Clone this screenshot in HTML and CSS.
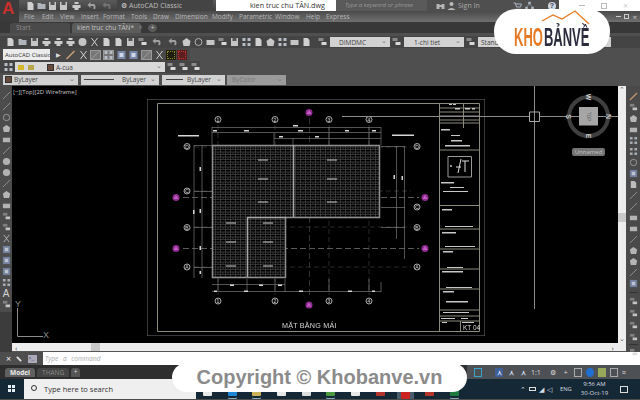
FILE: index.html
```html
<!DOCTYPE html>
<html lang="en">
<head>
<meta charset="utf-8">
<title>AutoCAD Classic - kien truc chu TÂN.dwg</title>
<link rel="stylesheet" href="styles.css">
</head>
<body>
<div class="app">
  <svg width="0" height="0" class="defs">
    <defs>
      <filter id="soft" x="0" y="0" width="100%" height="100%"><feGaussianBlur stdDeviation=".4"/></filter>
      <pattern id="bricks" width="10" height="5" patternUnits="userSpaceOnUse">
        <rect width="10" height="5" fill="#050505"/>
        <path d="M0 .5H10M0 3H10M.5 0V5M5.500 0V5M3 3V5M8 3V5" stroke="#5a5a5a" stroke-width=".5" fill="none"/>
      </pattern>
      <symbol id="i-doc" viewBox="0 0 10 10"><path d="M2 1h4l2 2v6H2z" fill="#d0d0d0"/></symbol>
      <symbol id="i-open" viewBox="0 0 10 10"><path d="M1 2h3l1 1h4v5H1z" fill="#b0b5bb"/></symbol>
      <symbol id="i-save" viewBox="0 0 10 10"><path d="M1.500 1h7v8h-7z" fill="#c6c6c6"/><path d="M3 1h4v3H3z" fill="#555"/></symbol>
      <symbol id="i-print" viewBox="0 0 10 10"><path d="M3 1h4v2H3zM1 4h8v3H1zM3 7h4v2H3z" fill="#cacaca"/></symbol>
      <symbol id="i-undo" viewBox="0 0 10 10"><path d="M1 4l3-3v2h3q2 0 2 3t-2 2v-3H4v2z" fill="#a0a0a0"/></symbol>
      <symbol id="i-cut" viewBox="0 0 10 10"><path d="M2 1l6 8M8 1L2 9" stroke="#cecece" stroke-width="1"/></symbol>
      <symbol id="i-blue" viewBox="0 0 10 10"><path d="M1 1h8v8H1z" fill="#7788aa"/><path d="M3 3h4v4H3z" fill="#d0d7e8"/></symbol>
      <symbol id="i-grid" viewBox="0 0 10 10"><path d="M1 1h3v3H1zM6 1h3v3H6zM1 6h3v3H1zM6 6h3v3H6z" fill="#b6bdc6"/></symbol>
      <symbol id="i-line" viewBox="0 0 10 10"><path d="M1 9L9 1" stroke="#a0a0a0" stroke-width="1"/></symbol>
      <symbol id="i-pencil" viewBox="0 0 10 10"><path d="M1 9L9 1" stroke="#d0a070" stroke-width="1.500"/></symbol>
      <symbol id="i-poly" viewBox="0 0 10 10"><path d="M5 1l4 3-1 5H2L1 4z" fill="#c8c8c8"/></symbol>
      <symbol id="i-ball" viewBox="0 0 10 10"><circle cx="5" cy="5" r="4" fill="#c4c4c4"/></symbol>
      <symbol id="i-ring" viewBox="0 0 10 10"><circle cx="5" cy="5" r="3.500" fill="none" stroke="#b0b0b0" stroke-width="1"/></symbol>
      <symbol id="i-box" viewBox="0 0 10 10"><path d="M1 3h8v5H1z" fill="#c6c6c6"/></symbol>
      <symbol id="i-stack" viewBox="0 0 10 10"><path d="M1 1h5v3H1z" fill="#8a8a8a"/><path d="M4 5h5v3H4z" fill="#d8d8d8"/></symbol>
      <symbol id="i-bino" viewBox="0 0 10 10"><path d="M1 3h3v5H1zM6 3h3v5H6zM4 4h2v2H4z" fill="#b4b4b4"/></symbol>
      <symbol id="i-user" viewBox="0 0 10 10"><circle cx="5" cy="3" r="2" fill="#bbb"/><path d="M1 9q4-4 8 0z" fill="#bbb"/></symbol>
      <symbol id="i-cart" viewBox="0 0 10 10"><path d="M1 2h2l1 4h4l1-3H3M4 8h1M7 8h1" fill="none" stroke="#a9b4c0" stroke-width="1"/></symbol>
      <symbol id="i-net" viewBox="0 0 10 10"><path d="M4 1h2v2H4zM1 6h2v2H1zM7 6h2v2H7zM5 3L2 6M5 3l3 3" fill="#a9b4c0" stroke="#a9b4c0" stroke-width=".6"/></symbol>
    </defs>
  </svg>

  <header class="titlebar">
    <div class="quick">
      <div class="app-logo">A</div>
      <svg class="ico"><use href="#i-doc"/></svg><svg class="ico"><use href="#i-open"/></svg><svg class="ico"><use href="#i-save"/></svg><svg class="ico"><use href="#i-save"/></svg><svg class="ico wide"><use href="#i-print"/></svg><svg class="ico wide"><use href="#i-undo"/></svg><svg class="ico wide dim"><use href="#i-undo"/></svg>
      <div class="workspace"><span class="gear">⚙</span>AutoCAD Classic</div>
    </div>
    <div class="doc-title">kien truc chu TÂN.dwg</div>
    <div class="search-zone">
      <span class="search">Type a keyword or phrase</span>
      <svg class="ico bino"><use href="#i-bino"/></svg><svg class="ico"><use href="#i-user"/></svg>
      <span class="sign">Sign In</span>
      <svg class="ico"><use href="#i-cart"/></svg><svg class="ico net"><use href="#i-net"/></svg>
      <span class="help">?</span>
    </div>
    <div class="winbtns">
      <span class="minimize"></span><span class="restore"></span><span class="close">×</span>
    </div>
  </header>

  <nav class="menubar">
    <span class="m-file">File</span><span class="m-edit">Edit</span><span class="m-view">View</span><span class="m-ins">Insert</span><span class="m-for">Format</span><span class="m-too">Tools</span><span class="m-dra">Draw</span><span class="m-dim">Dimension</span><span class="m-mod">Modify</span><span class="m-par">Parametric</span><span class="m-win">Window</span><span class="m-hel">Help</span><span>Express</span>
    <span class="mdi"><i class="mdi-min"></i><i class="mdi-res"></i><i class="mdi-x">×</i></span>
  </nav>

  <div class="tabbar">
    <span class="tab">Start</span>
    <span class="tab tab-on">kien truc chu TÂN* <i>×</i></span>
    <span class="tab-add">+</span>
  </div>

  <div class="ribbon">
    <div class="tool-row row1">
      <svg class="ico"><use href="#i-doc"/></svg><svg class="ico"><use href="#i-open"/></svg><svg class="ico"><use href="#i-save"/></svg><svg class="ico"><use href="#i-print"/></svg><svg class="ico"><use href="#i-print"/></svg><svg class="ico"><use href="#i-print"/></svg><svg class="ico"><use href="#i-ball"/></svg><svg class="ico"><use href="#i-cut"/></svg><svg class="ico"><use href="#i-doc"/></svg><svg class="ico"><use href="#i-doc"/></svg><svg class="ico"><use href="#i-save"/></svg><svg class="ico"><use href="#i-stack"/></svg><svg class="ico wide"><use href="#i-undo"/></svg><svg class="ico wide"><use href="#i-undo"/></svg><svg class="ico"><use href="#i-poly"/></svg><svg class="ico"><use href="#i-ring"/></svg><svg class="ico"><use href="#i-box"/></svg><svg class="ico"><use href="#i-stack"/></svg><svg class="ico"><use href="#i-save"/></svg><svg class="ico"><use href="#i-grid"/></svg><svg class="ico"><use href="#i-doc"/></svg><svg class="ico"><use href="#i-poly"/></svg><svg class="ico"><use href="#i-grid"/></svg><svg class="ico"><use href="#i-box"/></svg><svg class="ico"><use href="#i-doc"/></svg>
      <div class="styles">
        <svg class="ico"><use href="#i-stack"/></svg><span class="combo c-dim">DIMDMC<b>⌄</b></span>
        <svg class="ico"><use href="#i-stack"/></svg><span class="combo c-chi">1-chi tiet<b>⌄</b></span>
        <svg class="ico"><use href="#i-stack"/></svg><span class="combo c-std">Standard<b>⌄</b></span>
      </div>
    </div>
    <div class="tool-row row2">
      <span class="combo c-ws">AutoCAD Classic</span>
      <span class="play">▶</span>
      <svg class="ico"><use href="#i-pencil"/></svg><svg class="ico"><use href="#i-cut"/></svg><svg class="ico boxed"><use href="#i-line"/></svg><svg class="ico boxed"><use href="#i-grid"/></svg><svg class="ico"><use href="#i-blue"/></svg><svg class="ico"><use href="#i-blue"/></svg><svg class="ico boxed"><use href="#i-line"/></svg><svg class="ico"><use href="#i-cut"/></svg>
      <span class="swatch sw-green"></span><span class="swatch sw-red"></span>
    </div>
    <div class="tool-row row3">
      <svg class="ico"><use href="#i-grid"/></svg>
      <span class="combo c-layer"><span class="lamp"></span><span class="lsw"></span>A-cua<b>⌄</b></span>
      <svg class="ico"><use href="#i-stack"/></svg><svg class="ico"><use href="#i-stack"/></svg><svg class="ico"><use href="#i-stack"/></svg>
    </div>
    <div class="tool-row row4">
      <span class="combo c-by"><span class="lsw"></span>ByLayer<b>⌄</b></span>
      <span class="combo c-by"><i class="rule"></i>ByLayer<b>⌄</b></span>
      <span class="combo c-by2"><i class="rule"></i>ByLayer<b>⌄</b></span>
      <span class="combo c-col">ByColor<b>⌄</b></span>
    </div>
  </div>

  <div class="workarea">
    <aside class="side-left">
      <div class="left-tools">
        <svg class="sico"><use href="#i-line"/></svg><svg class="sico"><use href="#i-line"/></svg><svg class="sico"><use href="#i-ring"/></svg><svg class="sico"><use href="#i-poly"/></svg><svg class="sico"><use href="#i-box"/></svg><svg class="sico"><use href="#i-line"/></svg><svg class="sico"><use href="#i-ball"/></svg><svg class="sico"><use href="#i-ball"/></svg><svg class="sico"><use href="#i-line"/></svg><svg class="sico"><use href="#i-poly"/></svg><svg class="sico"><use href="#i-box"/></svg><svg class="sico"><use href="#i-stack"/></svg><svg class="sico"><use href="#i-stack"/></svg><svg class="sico"><use href="#i-cut"/></svg><svg class="sico"><use href="#i-blue"/></svg><svg class="sico"><use href="#i-blue"/></svg><svg class="sico"><use href="#i-blue"/></svg><svg class="sico"><use href="#i-grid"/></svg>
        <span class="side-a">A</span>
        <svg class="sico"><use href="#i-stack"/></svg>
      </div>
    </aside>
    <div class="center">
      <main class="canvas">
        <div class="viewlabel">[−][Top][2D Wireframe]</div>
        <svg class="drawing" viewBox="12 87 606 257" width="606" height="257">
          <g filter="url(#soft)">
            <g fill="none">
              <path d="M147 100H485V337H147z" stroke="#6f6f6f"/>
              <path d="M157.500 104.500H479.500V332.500H157.500z" stroke="#8b8b7c"/>
            </g>
            <g stroke="#2e2e2e" stroke-dasharray="5 3" fill="none">
              <path d="M218 126V296M275 126V296M329 126V296M369 126V296"/>
              <path d="M194 148H411M194 192H411M194 228H411M194 268H411"/>
            </g>
            <g stroke="#5a5a5a" stroke-dasharray="6 3" fill="none">
              <path d="M183 198.500H419M183 249.500H419"/>
            </g>
            <path d="M309.500 119V299" stroke="#333" stroke-dasharray="6 3" fill="none"/>
            <path d="M212.500 146.500H379.500V218.500H285.500V278.500H212.500z" fill="url(#bricks)" stroke="#8f8f8f" stroke-width="1.500"/>
            <path d="M293.500 146V218M247.500 218V278M247 218.500H286" stroke="#a8a8a8" stroke-width="1.500" fill="none"/>
            <path d="M258 161h10M258 180h10M258 203h10M327 161h10M327 180h10M327 203h10M226 224h10M263 224h10M226 243h10M263 243h10M226 267h10M263 267h10" stroke="#c9c9c9" fill="none"/>
            <g stroke="#777" fill="none" stroke-width=".7">
              <path d="M212 128.500H381M212 133.500H381M274 139.500H381M212 128V146M381 128V146M274 134V146M293 139V146M329 128V146M369 128V146"/>
              <path d="M194 146.500H212M194 192.500H212M194 228.500H212M194 268.500H212M194 146V279M202 146V279"/>
              <path d="M381 147.500H405M381 208.500H405M381 228.500H405M396.500 147V240M404.500 147V260"/>
              <path d="M212 285.500H285M212 292.500H381M218 280V293M247 280V293M275 280V293M285 280V293M329 280V293M369 280V293M381 283V293"/>
            </g>
            <g fill="#d6d6d6">
              <path d="M213 131h4v1.500h-4zM244 131h5v1.500h-5zM293 126h5v1.500h-5zM298 131h5v1.500h-5zM315 137h4v1.500h-4zM345 131h4v1.500h-4zM372 131h4v1.500h-4zM279 137h4v1.500h-4z"/>
              <path d="M199.500 168h1.500v4h-1.500zM193 211h1.500v4h-1.500zM199.500 210h1.500v4h-1.500zM199.500 247h1.500v4h-1.500zM199.500 272h1.500v3h-1.500zM393.500 176h1.500v4h-1.500zM401.500 177h1.500v4h-1.500z"/>
              <path d="M230 285.500h4v1.500h-4zM259 285.500h4v1.500h-4zM278 285.500h4v1.500h-4zM214 291.500h3v1.500h-3zM244 291.500h4v1.500h-4zM299 291.500h4v1.500h-4zM348 291.500h4v1.500h-4zM372 291.500h3v1.500h-3z"/>
              <path d="M178 136h21v1.500h-21zM392 135.500h22v1.500h-22z"/>
            </g>
            <g fill="#111" stroke="#b8b8b8" stroke-width=".9">
              <circle cx="218" cy="120.500" r="3"/><circle cx="275" cy="120.500" r="3"/><circle cx="329" cy="120.500" r="3"/><circle cx="369" cy="120.500" r="3"/>
              <circle cx="218" cy="302" r="3"/><circle cx="275" cy="302" r="3"/><circle cx="329" cy="302" r="3"/><circle cx="369" cy="302" r="3"/>
              <circle cx="187" cy="147.500" r="3"/><circle cx="187" cy="192" r="3"/><circle cx="187" cy="228.500" r="3"/><circle cx="187" cy="268" r="3"/>
              <circle cx="417" cy="147.500" r="3"/><circle cx="417" cy="208" r="3"/><circle cx="417" cy="228.500" r="3"/><circle cx="417" cy="268" r="3"/>
            </g>
            <g class="bubble-text">
              <text x="218" y="122.500">1</text><text x="275" y="122.500">2</text><text x="329" y="122.500">3</text><text x="369" y="122.500">4</text>
              <text x="218" y="304">1</text><text x="275" y="304">2</text><text x="329" y="304">3</text><text x="369" y="304">4</text>
              <text x="187" y="149.500">D</text><text x="187" y="194">C</text><text x="187" y="230.500">B</text><text x="187" y="270">A</text>
              <text x="417" y="149.500">D</text><text x="417" y="210">C</text><text x="417" y="230.500">B</text><text x="417" y="270">A</text>
            </g>
            <g fill="#8e2a90">
              <circle cx="309" cy="113.500" r="3.500"/><circle cx="176" cy="198.500" r="3.500"/><circle cx="425" cy="198.500" r="3.500"/><circle cx="176" cy="249.500" r="3.500"/><circle cx="425" cy="249.500" r="3.500"/><circle cx="309" cy="306" r="3.500"/>
            </g>
            <g fill="#c060c0">
              <path d="M309 111l2.500 4h-5zM176 196l2.500 4h-5zM425 196l2.500 4h-5zM176 247l2.500 4h-5zM425 247l2.500 4h-5zM309 303.500l2.500 4h-5z"/>
            </g>
            <g stroke="#8b8b7c" fill="none">
              <path d="M439.500 104V332M439.500 151H479M439.500 206.500H479M439.500 230H479M439.500 250H479M439.500 270H479M439.500 290H479M439.500 311H479M439.500 317H479M439.500 322H479"/>
              <path d="M439.500 109H479M439.500 113H479M439.500 117H479M439.500 121H479M439.500 124H479M463.500 104V129M460.500 322V332"/>
              <path d="M448 157.500H471.500V178H448z" stroke="#9a9a9a"/>
              <path d="M458 174l3-14M462 162h7M465 162v11M456 168h5" stroke="#ddd"/>
            </g>
            <g fill="#c8c8c8">
              <path d="M441 130h9v1.500h-9zM451 136h9v1h-9zM451 141h11v1.500h-11zM445 146h25v1.500h-25zM441 183h13v1.500h-13zM450 188h14v1h-14zM443 192h25v1h-25zM442 210h10v1.500h-10zM445 227h28v1h-28zM442 233h14v1.500h-14zM445 247h30v1h-30zM443 252h10v1.500h-10zM447 268h16v1h-16zM442 272h21v1.500h-21zM446 288h26v1h-26zM443 292h11v1.500h-11zM446 302h22v1.500h-22zM443 313h26v1h-26zM441 319h14v1h-14zM461 319h7v1h-7zM442 323h5v1h-5zM462 323h12v1h-12z"/>
              <path d="M449 105h3v1h-3zM453 105h3v1h-3zM455 109h5v1.500h-5zM465 109h5v1.500h-5zM472 109h3v1.500h-3z"/>
              <circle cx="451" cy="167" r="1"/>
            </g>
            <text x="463" y="330.500" class="t-kt">KT 04</text>
            <text x="282" y="328.500" class="t-title">MẶT BẰNG MÁI</text>
          </g>
          <g stroke="#8c8c8c" fill="none">
            <path d="M534.500 87V310M342 117.500H529M540 117.500H618"/>
            <path d="M529.500 113H539.500V122.500H529.500z" stroke="#aaa"/>
          </g>
          <circle cx="588.500" cy="117.500" r="19.500" fill="none" stroke="#3f3f3f" stroke-width="4"/>
          <path d="M579 108h19v18.500h-19z" fill="#a6a6a6"/>
          <text x="588.500" y="119" class="t-top" transform="rotate(90 588.500 117.500)">TOP</text>
          <text x="588.500" y="100.500" class="t-cmp" transform="rotate(90 588.500 98)">W</text>
          <text x="608.500" y="120" class="t-cmp" transform="rotate(90 608.500 117.500)">N</text>
          <text x="588.500" y="139.500" class="t-cmp" transform="rotate(90 588.500 137)">E</text>
          <text x="568" y="120" class="t-cmp" transform="rotate(90 568 117.500)">S</text>
          <rect x="572" y="149" width="33" height="8" rx="2" fill="#737373"/>
          <text x="588.500" y="155.200" class="t-unnamed">Unnamed</text>
          <path d="M17.500 309V337.500H43" stroke="#8a8a8a" fill="none"/>
          <text x="15" y="308" class="t-ucs">Y</text>
          <text x="43" y="339" class="t-ucs">X</text>
        </svg>
        <div class="vscroll">
          <span class="arrow">⌃</span>
          <span class="thumb-v"></span>
          <span class="arrow">⌄</span>
        </div>
      </main>
      <div class="hscroll"><span class="harrow">‹</span><span class="thumb-h"></span><span class="harrow">›</span></div>
    </div>
    <aside class="side-right">
      <svg class="sico"><use href="#i-pencil"/></svg><svg class="sico"><use href="#i-stack"/></svg><svg class="sico"><use href="#i-poly"/></svg><svg class="sico"><use href="#i-box"/></svg><svg class="sico"><use href="#i-grid"/></svg><svg class="sico"><use href="#i-grid"/></svg><svg class="sico"><use href="#i-ring"/></svg><svg class="sico"><use href="#i-blue"/></svg><svg class="sico"><use href="#i-doc"/></svg><svg class="sico"><use href="#i-line"/></svg><svg class="sico"><use href="#i-line"/></svg><svg class="sico"><use href="#i-box"/></svg><svg class="sico"><use href="#i-box"/></svg><svg class="sico"><use href="#i-line"/></svg><svg class="sico"><use href="#i-poly"/></svg><svg class="sico"><use href="#i-poly"/></svg><svg class="sico"><use href="#i-line"/></svg><svg class="sico"><use href="#i-blue"/></svg>
      <div class="right-group">
        <svg class="sico"><use href="#i-stack"/></svg><svg class="sico"><use href="#i-stack"/></svg><svg class="sico"><use href="#i-stack"/></svg><svg class="sico"><use href="#i-stack"/></svg>
      </div>
      <div class="right-group last">
        <svg class="sico"><use href="#i-stack"/></svg>
      </div>
    </aside>
  </div>

  <div class="cmdline">
    <span class="cmd-tools"><span class="cmd-x">×</span><span class="cmd-wrench"></span><span class="cmd-prompt">&gt;_</span></span>
    <span class="cmd-text">Type a command</span>
  </div>

  <div class="layouts">
    <div class="layout-tabs">
      <span class="lt lt-on">Model</span><span class="lt">THANG</span><span class="lt-add">+</span>
    </div>
    <div class="status">
      <span class="st st-blue"></span><span class="st st-a">⋏</span><span class="st st-a">⋏</span><span class="st st-a">⋏</span><span class="st-txt">1:1</span><span class="st st-gear">⚙</span><span class="st-txt st-plus">+</span><span class="st st-dim"></span><span class="st st-on"></span><span class="st st-grn"></span><span class="st st-dim"></span><span class="st-txt">≡</span>
    </div>
  </div>

  <footer class="taskbar">
    <span class="win"><i></i><i></i><i></i><i></i></span>
    <div class="task-search"><span class="lens"></span>Type here to search</div>
    <div class="task-apps">
      <span class="a-white"></span><span class="a-edge"></span><span class="a-folder"></span><span class="a-white"></span><span class="a-store"></span><span class="a-chrome"></span><span class="a-white"></span><span class="a-red"></span><span class="a-cad"></span><span class="a-red"></span><span class="a-xls"></span>
    </div>
    <div class="tray">
      <span class="tray-i">⌃</span><span class="batt"></span><span class="tray-i">◢</span><span class="tray-i">◁</span><span class="eng">ENG</span>
      <span class="clock">9:56 AM<br>30-Oct-19</span>
      <span class="notif"></span>
    </div>
  </footer>

  <div class="logo-pill">
    <svg class="roof" viewBox="0 0 52 18" width="52" height="18"><path d="M2 12L13 6l9 4L35 2l14 13" fill="none" stroke="#e67a24" stroke-width="1.300"/></svg>
    <div class="logo-text"><span class="kho">KHO</span><span class="banve">BẢNVỀ</span></div>
  </div>
  <div class="copy-pill">Copyright © Khobanve.vn</div>
</div>
</body>
</html>
```

FILE: styles.css
```css
* { box-sizing: border-box; }
html, body { margin: 0; padding: 0; background: #000; }
body { width: 640px; height: 400px; overflow: hidden; }
.app {
  position: relative;
  width: 640px;
  height: 400px;
  display: flex;
  flex-direction: column;
  font-family: "Open Sans", "Liberation Sans", sans-serif;
  font-size: 6.5px;
  color: #c9c9c9;
  background: #4c4c4c;
  overflow: hidden;
}
.defs { position: absolute; }
.ico { width: 11px; height: 10px; flex: none; }
.ico.wide { width: 15px; }
.ico.dim { opacity: .45; }
.ico.boxed { background: #777; outline: 1px solid #999; outline-offset: -1px; margin-right: 1px; }
.sico { display: block; width: 9px; height: 9px; flex: none; opacity: .85; }

.titlebar { height: 11px; display: flex; flex: none; background: #fff; }
.quick { width: 216px; display: flex; align-items: center; background: linear-gradient(#5a5a5a, #404040); padding-right: 3px; position: relative; }
.app-logo {
  width: 19px; height: 22px; margin-right: 6px; align-self: flex-start; flex: none;
  background: #3b3b3b; color: #c9302c;
  font: bold 17px/17px "Liberation Sans", sans-serif;
  padding-left: 2px;
  position: relative; z-index: 2;
  overflow: hidden;
}
.workspace { margin-left: 3px; flex: 1; height: 11px; background: #444; font-size: 7px; line-height: 11px; color: #bdbdbd; white-space: nowrap; }
.gear { margin: 0 2px 0 4px; color: #ddd; }
.doc-title { flex: 1; padding-left: 34px; color: #333; font-size: 7.2px; line-height: 11px; white-space: nowrap; }
.search-zone { width: 223px; display: flex; align-items: center; background: #4f4f4f; white-space: nowrap; overflow: hidden; flex: none; }
.search { width: 91px; padding-left: 9px; height: 11px; line-height: 10px; background: #5a5a5a; font-style: italic; font-size: 6px; color: #999; flex: none; }
.bino { margin-left: 8px; }
.sign { margin-left: 0; font-size: 7px; color: #aaa; width: 55px; padding-left: 1px; flex: none; }
.net { margin-left: 1px; }
.help { width: 8px; height: 8px; margin-left: 13px; border-radius: 50%; background: #cfd6e0; color: #345; font: bold 7px/8px "Liberation Sans", sans-serif; text-align: center; flex: none; }
.winbtns { width: 81px; flex: none; background: #fff; display: flex; align-items: center; gap: 16px; padding-left: 20px; color: #aaa; }
.minimize { width: 6px; height: 1px; background: #bbb; flex: none; }
.restore { width: 6px; height: 6px; border: 1px solid #bbb; flex: none; }
.close { font-size: 9px; line-height: 11px; font-weight: 300; }

.menubar {
  height: 11px; flex: none; display: flex; align-items: center;
  padding-left: 24px;
  background: linear-gradient(#4a4a4a, #707070);
  font-size: 6.5px; color: #b8b8b8; white-space: nowrap;
}
.m-file { width: 18px; }
.m-edit { width: 18px; }
.m-view { width: 21px; }
.m-ins { width: 22px; }
.m-for { width: 28px; }
.m-too { width: 22px; }
.m-dra { width: 22px; }
.m-dim { width: 37px; }
.m-mod { width: 27px; }
.m-par { width: 36px; }
.m-win { width: 31px; }
.m-hel { width: 20px; }
.mdi { margin-left: auto; display: flex; gap: 3px; align-items: center; padding-right: 3px; color: #ccc; }
.mdi-min { width: 5px; height: 1px; background: #ccc; }
.mdi-res { width: 5px; height: 5px; border: 1px solid #ccc; }
.mdi-x { font-style: normal; font-size: 8px; }
.tabbar { height: 11px; flex: none; display: flex; align-items: flex-end; padding-left: 10px; gap: 2px; background: #383838; }
.tab { height: 10px; width: 60px; padding-left: 6px; line-height: 10px; background: #4a4a4a; border-radius: 3px 3px 0 0; color: #8d8d8d; font-size: 6.5px; white-space: nowrap; }
.tab-on { width: 69px; background: #5c5c5c; color: #c5c5c5; padding-left: 5px; }
.tab-on i { font-style: normal; color: #888; margin-left: 3px; }
.tab-add { width: 9px; height: 8px; margin: 0 0 1px 5px; background: #5a5a5a; border-radius: 50%; text-align: center; line-height: 8px; color: #ccc; }

.ribbon { height: 53px; flex: none; display: flex; flex-direction: column; background: #4f4f4f; padding-top: 3px; }
.tool-row { display: flex; align-items: center; flex: none; white-space: nowrap; }
.row1 { height: 12px; padding-left: 5px; background: #444; }
.row1 .ico { margin-right: 1px; }
.styles { display: flex; align-items: center; background: #444; gap: 1px; margin-left: 4px; }
.row2 { height: 13px; padding-left: 3px; gap: 1.2px; width: 190px; background: #484848; }
.row3 { height: 12px; padding-left: 3px; width: 200px; gap: 1px; background: #444; }
.row4 { height: 13px; padding-left: 3px; gap: 2px; background: #4f4f4f; }
.combo { position: relative; display: flex; align-items: center; height: 10px; background: #d2d2d2; color: #444; font-size: 6.5px; padding-left: 5px; white-space: nowrap; flex: none; }
.combo b { position: absolute; right: 3px; top: -1px; font-weight: 400; font-size: 7px; line-height: 9px; color: #777; }
.c-dim { width: 60px; padding-left: 9px; }
.c-chi { width: 60px; padding-left: 10px; }
.c-std { width: 133px; padding-left: 3px; }
.c-ws { width: 47px; padding-left: 2px; background: #ececec; color: #333; height: 11px; font-size: 6px; }
.play { color: #ddd; margin: 0 3px 0 5px; font-size: 6px; }
.swatch { width: 10px; height: 10px; flex: none; }
.sw-green { background: #1e1e0a; outline: 1px dotted #8a8a2a; outline-offset: -2px; }
.sw-red { background: #5a1e1e; outline: 1px dotted #b33; outline-offset: -2px; }
.c-layer { width: 150px; background: #d8d8d8; padding-left: 3px; }
.lamp { width: 30px; height: 5px; flex: none; background: linear-gradient(90deg, #d6b92a 0 6px, transparent 6px 10px, #b9a54a 10px 16px, transparent 16px); }
.lsw { width: 5px; height: 5px; background: #6a4a3a; outline: 1px solid #333; margin-right: 3px; flex: none; }
.c-by { width: 75px; padding-left: 3px; margin-right: 1px; }
.c-by + .c-by { width: 78px; }
.c-by2 { width: 63px; padding-left: 4px; }
.rule { width: 26px; height: 1px; background: #444; margin-right: 6px; flex: none; }
.c-by + .c-by .rule { width: 30px; margin-right: 8px; }
.c-by2 .rule { width: 17px; margin-right: 4px; }
.c-col { width: 59px; background: #9b9b9b; color: #777; }

.workarea { height: 266px; flex: none; display: flex; }
.side-left { width: 12px; flex: none; background: #3c3c3c; display: flex; flex-direction: column; }
.left-tools { display: flex; flex-direction: column; align-items: center; padding-top: 5px; gap: 2px; background: #4c4c4c; height: 226px; }
.side-a { font: 10px/9px "Liberation Sans", sans-serif; color: #d5d5d5; }
.center { flex: 1; display: flex; flex-direction: column; min-width: 0; }
.canvas { position: relative; height: 257px; display: flex; background: #000; flex: none; }
.drawing { display: block; flex: none; }
.viewlabel { position: absolute; left: 1px; top: 2px; font-size: 5.9px; line-height: 8px; color: #c8c8c8; white-space: nowrap; }
.vscroll { flex: 1; background: #ededed; display: flex; flex-direction: column; align-items: center; justify-content: space-between; color: #666; font-size: 7px; line-height: 8px; position: relative; }
.thumb-v { position: absolute; top: 127px; left: 0; width: 100%; height: 9px; background: #c9c9c9; }
.hscroll { height: 9px; flex: none; display: flex; align-items: center; justify-content: space-between; padding: 0 12px 0 3px; background: #ededed; border-bottom: 1px solid #555; color: #555; font-size: 8px; line-height: 7px; position: relative; }
.thumb-h { position: absolute; left: 79px; top: 0; width: 9px; height: 8px; background: #c9c9c9; }
.side-right { width: 14px; flex: none; background: #4a4a4a; display: flex; flex-direction: column; align-items: center; padding: 6px 0 0 1px; gap: 2px; }
.right-group { display: flex; flex-direction: column; gap: 3px; border-top: 1px solid #333; padding-top: 4px; margin-top: 2px; }
.right-group.last { padding-top: 3px; margin-top: 0; }

.cmdline { height: 13px; flex: none; display: flex; background: #fff; align-items: center; }
.cmd-tools { width: 43px; height: 13px; display: flex; align-items: center; padding-left: 6px; gap: 5px; background: #4e4e4e; color: #eee; flex: none; }
.cmd-x { font-size: 9px; line-height: 10px; }
.cmd-wrench { width: 6px; height: 2px; background: #ddd; transform: rotate(45deg); }
.cmd-prompt { width: 9px; height: 8px; background: #aab; color: #334; font: 5px/8px "Liberation Mono", monospace; margin-left: 1px; }
.cmd-text { font-style: italic; color: #aaa; margin-left: 2px; font-size: 6.5px; word-spacing: 3px; }

.layouts { height: 14px; flex: none; display: flex; justify-content: space-between; background: #2e2e2e; }
.layout-tabs { display: flex; align-items: center; padding-left: 5px; gap: 2px; }
.lt { height: 9px; padding: 0 5px; line-height: 9px; background: #454545; color: #8a8a8a; font-size: 6.5px; border-radius: 3px 3px 0 0; }
.lt-on { background: #606060; color: #eee; font-weight: 700; }
.lt-add { width: 9px; height: 9px; background: #555; line-height: 8px; text-align: center; color: #ddd; border-radius: 3px 3px 0 0; }
.status { width: 173px; background: #4d5054; display: flex; align-items: center; gap: 4px; padding-left: 7px; color: #ddd; font-size: 7px; }
.st { width: 8px; height: 9px; line-height: 9px; text-align: center; flex: none; }
.st-blue { border: 1px solid #3aa3c9; margin-right: 9px; }
.st-a { color: #cfdcf0; font-weight: 700; }
.st-blue + .st-a { background: #3d5f96; }
.st-gear { margin: 0 3px 0 4px; }
.st-plus { font-size: 9px; margin-right: 2px; }
.st-dim { border: 1px solid #aaa; }
.st-on { background: #1f6fd0; border-radius: 50%; }
.st-grn { background: #97a85a; }
.st-txt { flex: none; font-size: 7px; }

.taskbar { height: 20px; flex: none; display: flex; background: #152836; }
.win { width: 24px; display: grid; grid-template-columns: 3px 3px; grid-auto-rows: 3px; gap: 1px; padding: 6px 0 0 8px; flex: none; }
.win i { background: #e6eef5; }
.task-search { width: 172px; flex: none; background: #efefef; color: #333; font: 7.5px/20px "Open Sans", sans-serif; padding-left: 20px; position: relative; white-space: nowrap; }
.lens { position: absolute; left: 7px; top: 6px; width: 6px; height: 6px; border: 1px solid #333; border-radius: 50%; }
.task-apps { width: 316px; display: flex; gap: 15.7px; padding: 6px 0 0 7px; overflow: hidden; flex: none; align-items: flex-start; }
.a-edge, .a-folder, .a-store, .a-white, .a-chrome, .a-red, .a-cad, .a-xls { width: 9px; height: 11px; flex: none; border-radius: 1px; }
.a-edge { background: #1b87d6; box-shadow: 0 2px 0 #152836, 0 3px 0 #8ab; }
.a-folder { background: #c9b25a; box-shadow: 0 2px 0 #152836, 0 3px 0 #8ab; }
.a-store { background: #dcdcdc; }
.a-white { background: #e8e8e8; }
.a-chrome { background: #4b9a3f; box-shadow: 0 2px 0 #152836, 0 3px 0 #8ab; }
.a-red { background: #b5342b; }
.a-cad { background: #c22; outline: 4px solid #4a5c6c; height: 14px; }
.a-xls { background: #1f7a3d; box-shadow: 0 2px 0 #152836, 0 3px 0 #8ab; }
.tray { flex: 1; display: flex; align-items: center; gap: 3px; padding-left: 8px; color: #d6dce0; white-space: nowrap; font-size: 6.5px; }
.tray-i { font-size: 7px; }
.batt { width: 7px; height: 4px; border: 1px solid #ddd; }
.eng { font-size: 5.8px; margin: 0 4px 0 5px; }
.clock { text-align: center; font-size: 6px; line-height: 9px; margin-left: 2px; }
.notif { width: 8px; height: 7px; border: 1px solid #ddd; margin-left: 9px; }

.t-kt { font: 6.5px "Liberation Sans", sans-serif; fill: #d8d8d8; }
.t-title { font: 7.2px "Liberation Sans", sans-serif; fill: #d6d6d6; letter-spacing: .2px; }
.t-top { font: 4.5px "Liberation Sans", sans-serif; fill: #555; text-anchor: middle; }
.t-cmp { font: bold 7px "Liberation Sans", sans-serif; fill: #c9c9c9; text-anchor: middle; }
.t-unnamed { font: 6px "Open Sans", sans-serif; fill: #c5c5c5; text-anchor: middle; }
.t-ucs { font: 9px "Liberation Sans", sans-serif; fill: #8a8a8a; }
.bubble-text { font: 5px "Liberation Sans", sans-serif; fill: #c8c8c8; text-anchor: middle; }

.logo-pill {
  position: absolute; left: 494px; top: 9px; width: 116px; height: 45px;
  background: #fff; border-radius: 22px;
}
.roof { position: absolute; left: 46px; top: 0; }
.logo-text {
  position: absolute; left: 20px; top: 13.5px; display: flex;
  font: bold 26px/28px "Liberation Sans", sans-serif;
  white-space: nowrap;
  transform: scaleX(.5);
  transform-origin: left top;
}
.kho { color: #e67a24; margin-right: 2px; }
.banve { color: #2b2d3f; }
.copy-pill {
  position: absolute; left: 172px; top: 363px; width: 295px; height: 29px;
  background: #fff; border-radius: 15px; text-align: center;
  color: #8b8b8b; font: bold 20px/29px "Liberation Sans", sans-serif;
  white-space: nowrap;
}
```
